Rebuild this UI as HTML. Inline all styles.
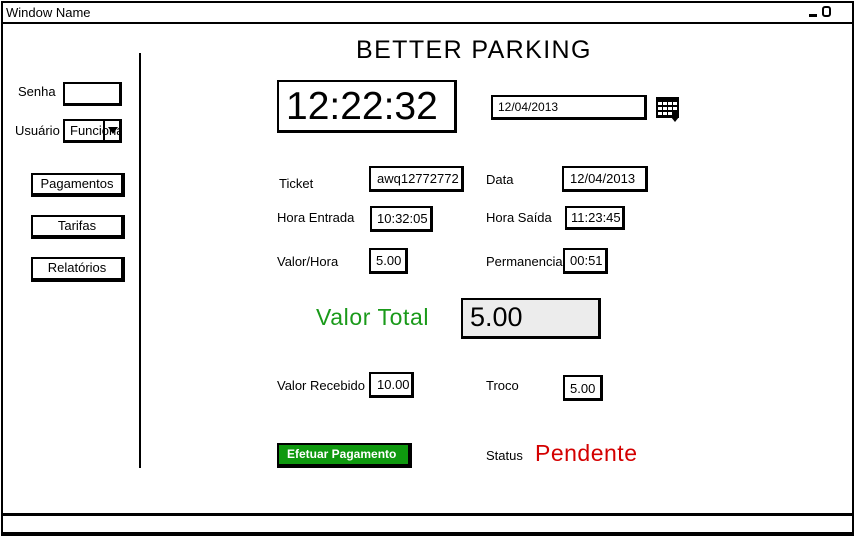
<!DOCTYPE html>
<html><head><meta charset="utf-8"><style>
*{margin:0;padding:0;box-sizing:border-box}
body{width:856px;height:538px;background:#fff;position:relative;overflow:hidden;font-family:"Liberation Sans",sans-serif;color:#000}
div{position:absolute}
.t{font-size:13px;white-space:nowrap;line-height:1}
.b{border:2px solid #000;border-right-width:3px;border-bottom-width:3px;background:#fff;font-size:13px;line-height:1;padding:3px 0 0 3px;white-space:nowrap;overflow:hidden}
.btn{border:2px solid #000;border-right-width:4px;border-bottom-width:4px;background:#fff;font-size:13px;text-align:center;line-height:18px}
</style></head><body>
<div style="left:1px;top:1px;width:853px;height:535px;border:2px solid #000"></div>
<div style="left:1px;top:22px;width:853px;height:2px;background:#000"></div>
<div class="t" style="left:6px;top:6px;font-size:13px">Window Name</div>
<div style="left:809px;top:14px;width:8px;height:3px;background:#000"></div>
<div style="left:822px;top:6px;width:9px;height:11px;border:2px solid #000;border-radius:3px"></div>
<div style="left:1px;top:513px;width:853px;height:3px;background:#000"></div>
<div style="left:1px;top:532px;width:853px;height:2px;background:#000"></div>

<div class="t" style="left:356px;top:38px;font-size:25px;letter-spacing:1.4px">BETTER PARKING</div>
<div style="left:139px;top:53px;width:2px;height:415px;background:#000"></div>

<div class="t" style="left:18px;top:85px">Senha</div>
<div class="b" style="left:63px;top:82px;width:59px;height:24px"></div>
<div class="t" style="left:15px;top:124px">Usuário</div>
<div class="b" style="left:63px;top:119px;width:59px;height:24px;padding-left:5px">Funcioná</div>
<div style="left:103px;top:121px;width:2px;height:20px;background:#000"></div>
<div style="left:108px;top:127px;width:0;height:0;border-left:5px solid transparent;border-right:5px solid transparent;border-top:7px solid #000"></div>

<div class="btn" style="left:31px;top:173px;width:94px;height:24px">Pagamentos</div>
<div class="btn" style="left:31px;top:215px;width:94px;height:24px">Tarifas</div>
<div class="btn" style="left:31px;top:257px;width:94px;height:25px">Relatórios</div>

<div class="b" style="left:277px;top:80px;width:180px;height:53px;font-size:39px;padding:5px 0 0 7px">12:22:32</div>
<div class="b" style="left:491px;top:95px;width:156px;height:25px;padding:4px 0 0 5px;font-size:12px">12/04/2013</div>
<svg style="position:absolute;left:655px;top:96px" width="26" height="26" viewBox="0 0 26 26"><rect x="1" y="1" width="23" height="21" fill="#000"/><g fill="#fff"><rect x="3" y="6" width="4" height="3"/><rect x="8" y="6" width="4" height="3"/><rect x="13" y="6" width="4" height="3"/><rect x="18" y="6" width="4" height="3"/><rect x="3" y="11" width="4" height="3"/><rect x="8" y="11" width="4" height="3"/><rect x="13" y="11" width="4" height="3"/><rect x="18" y="11" width="4" height="3"/><rect x="3" y="16" width="4" height="3"/><rect x="8" y="16" width="4" height="3"/><rect x="13" y="16" width="4" height="3"/></g><path d="M16 21 L24 21 L20 26Z" fill="#000"/></svg>

<div class="t" style="left:279px;top:177px">Ticket</div>
<div class="b" style="left:369px;top:166px;width:95px;height:26px;padding:4px 0 0 6px">awq12772772</div>
<div class="t" style="left:486px;top:173px">Data</div>
<div class="b" style="left:562px;top:166px;width:86px;height:26px;padding:4px 0 0 6px">12/04/2013</div>

<div class="t" style="left:277px;top:211px">Hora Entrada</div>
<div class="b" style="left:370px;top:206px;width:63px;height:26px;padding:4px 0 0 5px">10:32:05</div>
<div class="t" style="left:486px;top:211px">Hora Saída</div>
<div class="b" style="left:565px;top:206px;width:60px;height:24px;padding:3px 0 0 4px">11:23:45</div>

<div class="t" style="left:277px;top:255px">Valor/Hora</div>
<div class="b" style="left:369px;top:248px;width:39px;height:26px;padding:4px 0 0 5px">5.00</div>
<div class="t" style="left:486px;top:255px">Permanencia</div>
<div class="b" style="left:563px;top:248px;width:45px;height:26px;padding:4px 0 0 5px">00:51</div>

<div class="t" style="left:316px;top:306px;font-size:23px;letter-spacing:0.6px;color:#1a9a1a">Valor Total</div>
<div class="b" style="left:461px;top:298px;width:140px;height:41px;background:#ececec;font-size:27px;padding:4px 0 0 7px">5.00</div>

<div class="t" style="left:277px;top:379px">Valor Recebido</div>
<div class="b" style="left:369px;top:372px;width:45px;height:26px;padding:4px 0 0 6px">10.00</div>
<div class="t" style="left:486px;top:379px">Troco</div>
<div class="b" style="left:563px;top:375px;width:40px;height:26px;padding:5px 0 0 5px">5.00</div>

<div style="left:277px;top:443px;width:135px;height:25px;background:#0f990f;border:2px solid #000;border-right-width:4px;border-bottom-width:4px;color:#fff;font-weight:bold;font-size:12px;line-height:19px;padding-left:8px;white-space:nowrap">Efetuar Pagamento</div>
<div class="t" style="left:486px;top:449px">Status</div>
<div class="t" style="left:535px;top:442px;font-size:23px;letter-spacing:0.5px;color:#d40000">Pendente</div>
</body></html>
